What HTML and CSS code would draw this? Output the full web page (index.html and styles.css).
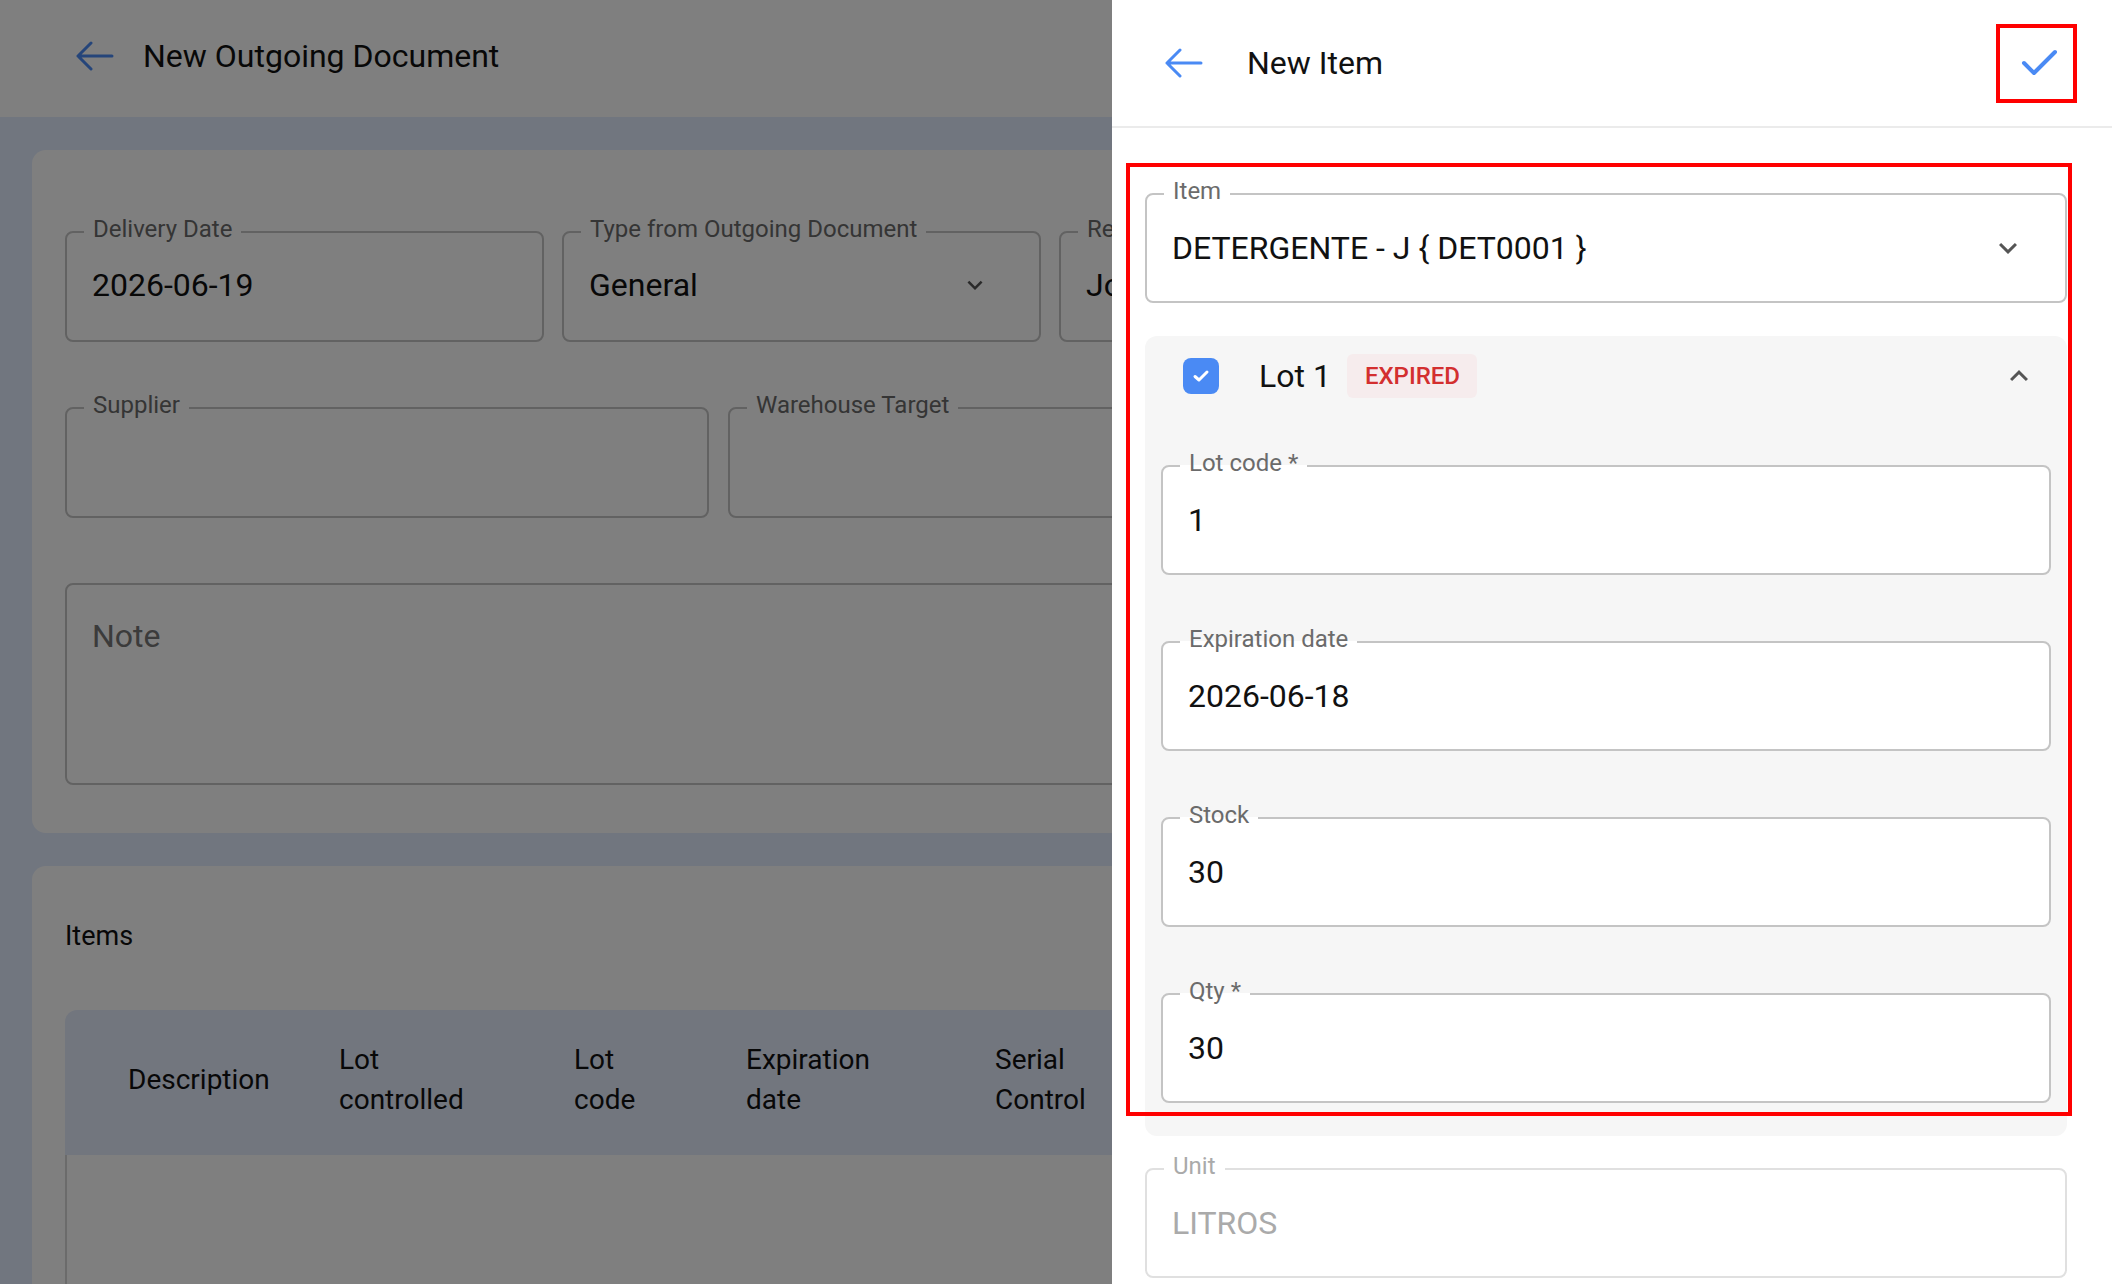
FILE: index.html
```html
<!DOCTYPE html>
<html lang="en">
	<head>
		<meta charset="UTF-8" />
		<meta name="viewport" content="width=device-width, initial-scale=1.0" />
		<title>New Outgoing Document</title>
		<link rel="stylesheet" href="styles.css">
	</head>
	<body>
		<div class="page">
			<header class="topbar">
				<svg class="back" viewBox="0 0 38 30" fill="none" stroke="currentColor" stroke-width="3" stroke-linecap="round" stroke-linejoin="round">
					<path d="M36 15H2M15 2L2 15l13 13" />
				</svg>
				<h1 class="topbar-title">New Outgoing Document</h1>
			</header>
			<main class="content">
				<section class="card card-form">
					<div class="row row-4">
						<div class="field">
							<span class="field-label">Delivery Date</span>
							<span class="field-value">2026-06-19</span>
						</div>
						<div class="field field-select">
							<span class="field-label">Type from Outgoing Document</span>
							<span class="field-value">General</span>
							<svg class="chevron" viewBox="0 0 24 24"><path fill="currentColor" d="M16.59 8.59 12 13.17 7.41 8.59 6 10l6 6 6-6z" /></svg>
						</div>
						<div class="field">
							<span class="field-label">Reason</span>
							<span class="field-value">João</span>
						</div>
						<div class="field field-empty"></div>
					</div>
					<div class="row row-3">
						<div class="field field-empty">
							<span class="field-label">Supplier</span>
						</div>
						<div class="field field-empty">
							<span class="field-label">Warehouse Target</span>
						</div>
						<div class="field field-empty"></div>
					</div>
					<div class="field field-note">
						<span class="placeholder">Note</span>
					</div>
				</section>
				<section class="card card-items">
					<h2 class="items-title">Items</h2>
					<div class="table">
						<div class="table-head">
							<div class="th th-desc">Description</div>
							<div class="th th-lot">Lot<br />controlled</div>
							<div class="th th-code">Lot<br />code</div>
							<div class="th th-exp">Expiration<br />date</div>
							<div class="th th-serial">Serial<br />Control</div>
						</div>
						<div class="table-body"></div>
					</div>
				</section>
			</main>
		</div>

		<div class="backdrop"></div>

		<aside class="drawer">
			<header class="drawer-head">
				<svg class="back" viewBox="0 0 38 30" fill="none" stroke="currentColor" stroke-width="3" stroke-linecap="round" stroke-linejoin="round">
					<path d="M36 15H2M15 2L2 15l13 13" />
				</svg>
				<h2 class="drawer-title">New Item</h2>
				<button class="save" type="button">
					<svg viewBox="0 0 37 28" fill="none" stroke="currentColor" stroke-width="4" stroke-linecap="round" stroke-linejoin="round">
						<path d="M3 14l10 10L34 3" />
					</svg>
				</button>
			</header>
			<div class="drawer-body">
				<div class="field field-select">
					<span class="field-label">Item</span>
					<span class="field-value">DETERGENTE - J { DET0001 }</span>
					<svg class="chevron" viewBox="0 0 24 24"><path fill="currentColor" d="M16.59 8.59 12 13.17 7.41 8.59 6 10l6 6 6-6z" /></svg>
				</div>
				<div class="lot">
					<div class="lot-head">
						<span class="checkbox">
							<svg viewBox="0 0 18 14" fill="none" stroke="#ffffff" stroke-width="3" stroke-linecap="round" stroke-linejoin="round">
								<path d="M3 7.5l4 3.5 8-8" />
							</svg>
						</span>
						<span class="lot-name">Lot 1</span>
						<span class="badge">EXPIRED</span>
						<svg class="chevron" viewBox="0 0 24 24"><path fill="currentColor" d="M12 8l-6 6 1.41 1.41L12 10.83l4.59 4.58L18 14z" /></svg>
					</div>
					<div class="lot-fields">
						<div class="field">
							<span class="field-label">Lot code *</span>
							<span class="field-value">1</span>
						</div>
						<div class="field">
							<span class="field-label">Expiration date</span>
							<span class="field-value">2026-06-18</span>
						</div>
						<div class="field">
							<span class="field-label">Stock</span>
							<span class="field-value">30</span>
						</div>
						<div class="field">
							<span class="field-label">Qty *</span>
							<span class="field-value">30</span>
						</div>
					</div>
				</div>
				<div class="field field-disabled unit">
					<span class="field-label">Unit</span>
					<span class="field-value">LITROS</span>
				</div>
			</div>
			<div class="highlight"></div>
		</aside>
	</body>
</html>
```

FILE: styles.css
```css
*,
*::before,
*::after {
	box-sizing: border-box;
}
body {
	margin: 0;
	width: 2112px;
	height: 1284px;
	overflow: hidden;
	position: relative;
	background-color: #e3edff;
	color: #111111;
	font-family: Roboto, 'Noto Sans', sans-serif;
}

/* page behind the drawer */
.page {
	height: 100%;
	display: flex;
	flex-direction: column;
}
.topbar {
	height: 117px;
	flex-shrink: 0;
	display: flex;
	align-items: center;
	padding: 0 0 5px 76px;
	background-color: #ffffff;
}
.back {
	width: 38px;
	height: 30px;
	flex-shrink: 0;
	color: #4a8af4;
}
.topbar-title {
	margin: 0 0 0 29px;
	font-size: 32px;
	font-weight: 400;
}
.content {
	flex-grow: 1;
	display: flex;
	flex-direction: column;
	padding: 33px 44px 0 32px;
}
.card {
	background-color: #ffffff;
	border-radius: 14px;
}
.card-form {
	display: flex;
	flex-direction: column;
	gap: 65px;
	padding: 81px 33px 48px;
}
.row {
	display: grid;
	gap: 18px;
}
.row-4 {
	grid-template-columns: repeat(4, 1fr);
}
.row-3 {
	grid-template-columns: repeat(3, 1fr);
	gap: 19px;
}

/* outlined fields */
.field {
	position: relative;
	height: 110px;
	display: flex;
	align-items: center;
	padding: 0 25px;
	border: 2px solid #c4c4c4;
	border-radius: 8px;
	background-color: #ffffff;
}
.card .field {
	height: 111px;
	padding-bottom: 3px;
}
.field-label {
	position: absolute;
	top: -16px;
	left: 17px;
	padding: 0 9px;
	font-size: 24px;
	line-height: 24px;
	color: #6b6b6b;
	background-color: #ffffff;
	white-space: nowrap;
}
.field-value {
	font-size: 32px;
	line-height: 40px;
	white-space: nowrap;
}
.field-select {
	padding-right: 39px;
}
.chevron {
	width: 36px;
	height: 36px;
	margin-left: auto;
	flex-shrink: 0;
	color: #555555;
}
.card .field-select {
	padding-right: 49px;
}
.card .chevron {
	width: 30px;
	height: 30px;
}
.card .field-note {
	height: 202px;
	align-items: flex-start;
	padding-top: 31px;
}
.placeholder {
	font-size: 32px;
	line-height: 40px;
	color: #777777;
}

/* items table */
.card-items {
	flex-grow: 1;
	display: flex;
	flex-direction: column;
	margin-top: 33px;
	padding: 54px 33px 0;
	border-radius: 14px 14px 0 0;
}
.items-title {
	margin: 0;
	font-size: 27px;
	font-weight: 400;
	line-height: 32px;
}
.table {
	flex-grow: 1;
	display: flex;
	flex-direction: column;
	margin-top: 58px;
}
.table-head {
	height: 145px;
	flex-shrink: 0;
	display: flex;
	align-items: center;
	padding: 0 0 5px 63px;
	background-color: #e5ecfd;
	border-radius: 12px 0 0 0;
	font-size: 28px;
	line-height: 40px;
}
.th-desc {
	width: 211px;
}
.th-lot {
	width: 235px;
}
.th-code {
	width: 172px;
}
.th-exp {
	width: 249px;
}
.table-body {
	flex-grow: 1;
	border-left: 2px solid #d6d6d6;
}

.backdrop {
	position: absolute;
	top: 0;
	left: 0;
	right: 0;
	bottom: 0;
	background-color: rgba(0, 0, 0, 0.5);
}

/* drawer */
.drawer {
	position: absolute;
	top: 0;
	right: 0;
	width: 1000px;
	height: 100%;
	display: flex;
	flex-direction: column;
	background-color: #ffffff;
}
.drawer-head {
	height: 128px;
	flex-shrink: 0;
	display: flex;
	align-items: center;
	padding: 0 35px 0 53px;
	border-bottom: 2px solid #ebebeb;
}
.drawer-title {
	margin: 0 0 0 44px;
	font-size: 32px;
	font-weight: 400;
}
.save {
	margin-left: auto;
	width: 81px;
	height: 79px;
	display: flex;
	align-items: center;
	justify-content: center;
	padding: 0 0 0 6px;
	border: 4px solid #ff0000;
	background: none;
}
.save svg {
	width: 37px;
	height: 28px;
	color: #4a8af4;
}
.drawer-body {
	padding: 65px 45px 0 33px;
}
.lot {
	margin-top: 33px;
	padding: 18px 16px 33px;
	background-color: #f6f6f6;
	border-radius: 12px;
}
.lot-head {
	height: 44px;
	display: flex;
	align-items: center;
	padding: 0 14px 0 22px;
}
.checkbox {
	width: 36px;
	height: 36px;
	display: flex;
	align-items: center;
	justify-content: center;
	background-color: #4a8af4;
	border-radius: 8px;
}
.checkbox svg {
	width: 18px;
	height: 14px;
}
.lot-name {
	margin-left: 40px;
	font-size: 32px;
}
.badge {
	height: 44px;
	display: flex;
	align-items: center;
	margin-left: 16px;
	padding: 0 17px 0 18px;
	background-color: #f6eced;
	color: #d32f2f;
	font-size: 24px;
	font-weight: 500;
	border-radius: 6px;
}
.lot-fields {
	display: flex;
	flex-direction: column;
	gap: 66px;
	margin-top: 67px;
}
.lot .field-label {
	background: linear-gradient(#f6f6f6 14px, #ffffff 14px);
}
.unit {
	margin-top: 32px;
}
.field-disabled {
	border-color: #e0e0e0;
}
.field-disabled .field-label,
.field-disabled .field-value {
	color: #aaaaaa;
}
.highlight {
	position: absolute;
	top: 163px;
	left: 14px;
	width: 946px;
	height: 953px;
	border: 4px solid #ff0000;
	pointer-events: none;
}
```
